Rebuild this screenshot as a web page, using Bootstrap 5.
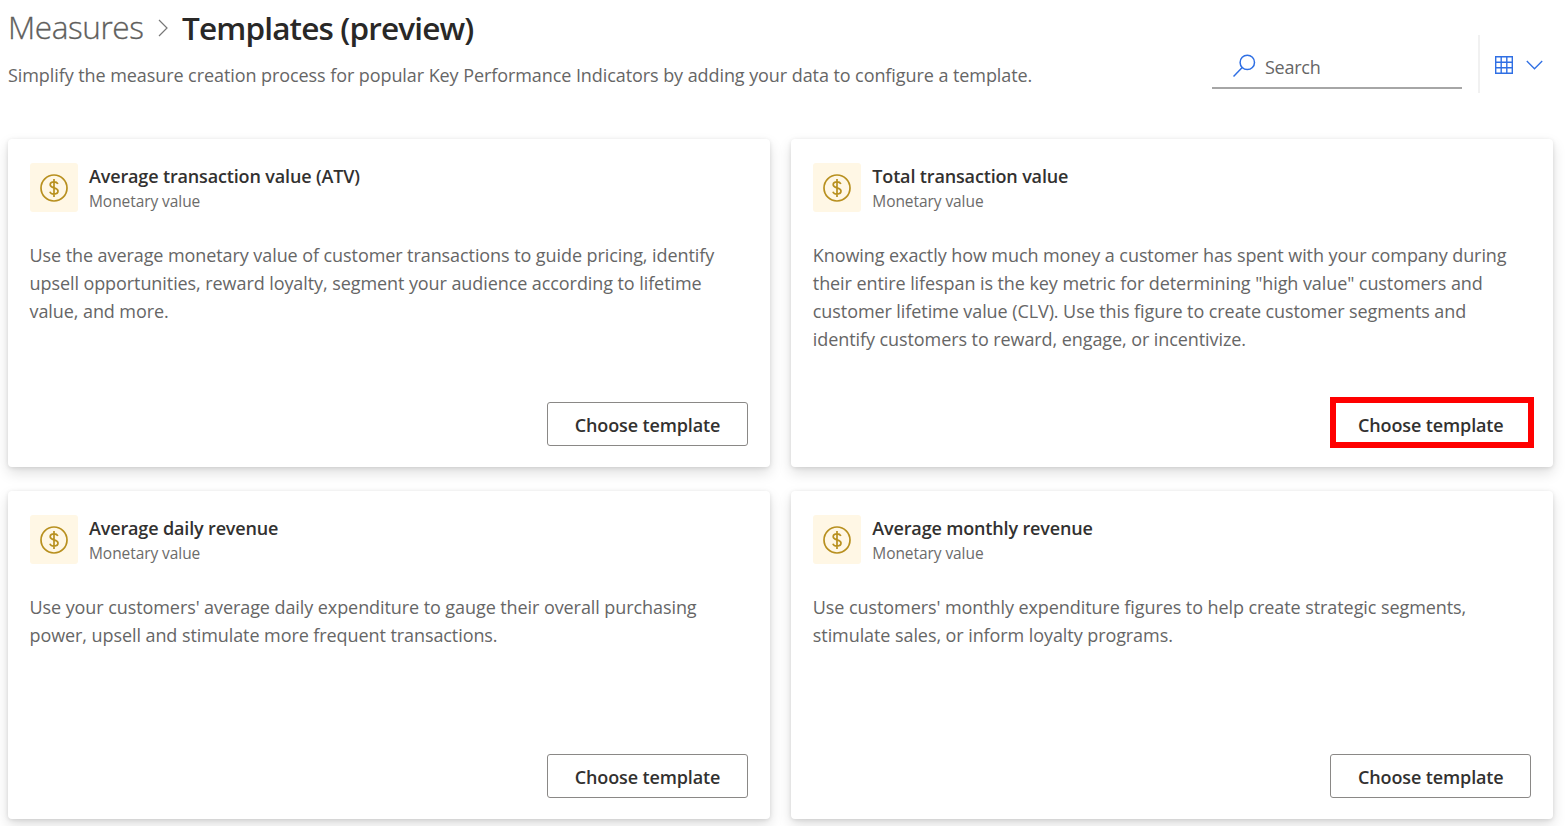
<!DOCTYPE html>
<html lang="en">
<head>
<meta charset="utf-8">
<meta name="viewport" content="width=device-width, initial-scale=1">
<title>Measures - Templates (preview)</title>
<link href="https://cdn.jsdelivr.net/npm/bootstrap@5.3.0/dist/css/bootstrap.min.css" rel="stylesheet">
<style>
body{font-family:"Open Sans","Noto Sans",sans-serif;color:#323130;background:#fff;overflow:hidden}
.page{height:826px;padding:0 12px 0 8px}
.page-head{height:139px}
.crumbs{height:56px;font-size:31.5px;line-height:56px;white-space:nowrap}
.crumb-root{color:#605e5c;font-weight:300;width:136px;letter-spacing:-.4px;margin-top:-2px;-webkit-text-stroke:.3px #605e5c}
.crumb-sep{width:10px;height:18px;margin:0 13px 0 14px}
.crumb-current{font-size:31.5px;font-weight:600;color:#292827;letter-spacing:-.85px;margin-left:1px}
.intro{font-size:18px;line-height:28px;color:#666;margin-top:5px;white-space:nowrap;letter-spacing:-.076px}
.tools{padding-top:35px}
.search-box{width:250px;height:54px;border-bottom:2px solid #a6a6a6;padding-left:21px;font-size:18px;color:#666;letter-spacing:-.25px}
.search-box svg{margin:10px 8px 0 0}
.search-box span{padding-top:13px}
.view-menu{height:58px;margin-left:16px;padding:2px 11px 0 15px;border-left:2px solid #f1f1f1;width:76px}
.tiles{display:grid;grid-template-columns:762px 762px;grid-template-rows:328px 328px;gap:24px 21.3px}
.tile{border:0;border-radius:4px;padding:24px 22px 21px 21.5px;box-shadow:0 6px 14px rgba(0,0,0,.13),0 1px 4px rgba(0,0,0,.11)}
.tile-icon{width:48.5px;height:48.5px;background:#fff7e5;border-radius:3px}
.tile-icon svg{margin-top:1px}
.tile-names{margin-left:11px}
.tile-title{font-size:18px;line-height:26px;font-weight:600;margin:0;white-space:nowrap;letter-spacing:-.15px}
.tile-kind{font-size:15.5px;line-height:24px;color:#6c6b6a;letter-spacing:-.07px}
.tile-text{font-size:18px;line-height:28px;color:#666;margin:28px 0 0;white-space:nowrap;letter-spacing:-.08px}
.choose{width:201px;height:44px;border:1px solid #8a8886;border-radius:3px;font-size:18px;font-weight:600;color:#323130;padding:0;line-height:44px;letter-spacing:-.12px}
.marked{position:relative}
.marked::after{content:"";position:absolute;left:-1px;top:-6px;width:204px;height:51px;border:6px solid #f00}
</style>
</head>
<body>
<svg class="d-none"><defs>
<symbol id="coin" viewBox="0 0 28 28"><g fill="none" stroke="#b8901f" stroke-width="1.7"><circle cx="14" cy="14" r="13"/><path d="M14 5v18M17.9 9.8C17.2 8.5 15.8 7.8 14 7.8c-2.2 0-3.8 1.1-3.8 2.9 0 4 7.8 2.3 7.8 6.4 0 1.9-1.7 3-4 3-2 0-3.5-.9-4.1-2.4"/></g></symbol>
</defs></svg>
<main class="page">
<header class="page-head d-flex justify-content-between">
<div>
<div class="crumbs d-flex align-items-center"><span class="crumb-root"><span>Measures</span></span><svg class="crumb-sep" viewBox="0 0 10 18" fill="none" stroke="#777" stroke-width="1.2"><path d="M1 1l8 8-8 8"/></svg><span class="crumb-current">Templates (preview)</span></div>
<p class="intro"><span>Simplify the measure creation process for popular Key Performance Indicators by adding your data to configure a template.</span></p>
</div>
<div class="tools d-flex align-items-start">
<div class="search-box d-flex align-items-center"><svg width="24" height="24" viewBox="0 0 24 24" fill="none" stroke="#2f6fe4" stroke-width="1.5"><circle cx="14.3" cy="8.4" r="7.2"/><path d="M9.2 13.5L.5 22.5"/></svg><span>Search</span></div>
<div class="view-menu d-flex align-items-center justify-content-between"><svg width="18" height="18" viewBox="0 0 18 18" fill="none" stroke="#2f6fe4" stroke-width="1.4"><path d="M.7.7h16.6v16.6H.7zM6.2.7v16.6M11.8.7v16.6M.7 6.2h16.6M.7 11.8h16.6"/></svg><svg width="17" height="10" viewBox="0 0 17 10" fill="none" stroke="#2f6fe4" stroke-width="1.3"><path d="M.8 1l7.7 7.8L16.2 1"/></svg></div>
</div>
</header>
<section class="tiles">
<article class="card tile">
<div class="d-flex"><span class="tile-icon d-flex align-items-center justify-content-center"><svg width="28" height="28"><use href="#coin"/></svg></span><div class="tile-names"><h2 class="tile-title">Average transaction value (ATV)</h2><div class="tile-kind">Monetary value</div></div></div>
<p class="tile-text">Use the average monetary value of customer transactions to guide pricing, identify<br>upsell opportunities, reward loyalty, segment your audience according to lifetime<br>value, and more.</p>
<button class="btn choose mt-auto align-self-end" type="button">Choose template</button>
</article>
<article class="card tile">
<div class="d-flex"><span class="tile-icon d-flex align-items-center justify-content-center"><svg width="28" height="28"><use href="#coin"/></svg></span><div class="tile-names"><h2 class="tile-title">Total transaction value</h2><div class="tile-kind">Monetary value</div></div></div>
<p class="tile-text">Knowing exactly how much money a customer has spent with your company during<br>their entire lifespan is the key metric for determining "high value" customers and<br>customer lifetime value (CLV). Use this figure to create customer segments and<br>identify customers to reward, engage, or incentivize.</p>
<button class="btn choose marked mt-auto align-self-end" type="button">Choose template</button>
</article>
<article class="card tile">
<div class="d-flex"><span class="tile-icon d-flex align-items-center justify-content-center"><svg width="28" height="28"><use href="#coin"/></svg></span><div class="tile-names"><h2 class="tile-title">Average daily revenue</h2><div class="tile-kind">Monetary value</div></div></div>
<p class="tile-text">Use your customers' average daily expenditure to gauge their overall purchasing<br>power, upsell and stimulate more frequent transactions.</p>
<button class="btn choose mt-auto align-self-end" type="button">Choose template</button>
</article>
<article class="card tile">
<div class="d-flex"><span class="tile-icon d-flex align-items-center justify-content-center"><svg width="28" height="28"><use href="#coin"/></svg></span><div class="tile-names"><h2 class="tile-title">Average monthly revenue</h2><div class="tile-kind">Monetary value</div></div></div>
<p class="tile-text">Use customers' monthly expenditure figures to help create strategic segments,<br>stimulate sales, or inform loyalty programs.</p>
<button class="btn choose mt-auto align-self-end" type="button">Choose template</button>
</article>
</section>
</main>
<script src="https://cdn.jsdelivr.net/npm/bootstrap@5.3.0/dist/js/bootstrap.bundle.min.js"></script>
</body>
</html>
